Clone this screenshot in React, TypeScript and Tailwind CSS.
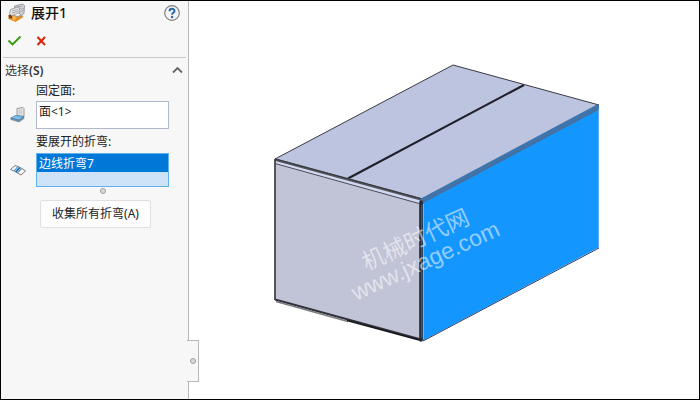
import React, { useState } from 'react';

const UnfoldIcon: React.FC = () => (
  <svg className="w-5 h-5 shrink-0" viewBox="0 0 20 20" aria-hidden="true">
    <path d="M1.500 13L5 10.500L15 12L16.500 14L8.500 19L1.500 16Z" fill="#e08f22" />
    <path d="M4 14L8 12L9.500 15L7 18Z" fill="#f6b545" />
    <path d="M1.500 12L4.500 11L5.500 15L2 15.500Z" fill="#7d4320" />
    <path d="M7.500 3L15.500 1L17.500 2.500L17 10.500L13 13.500L8.500 12.500Z" fill="#cfd1d4" stroke="#8a8d92" strokeWidth="0.800" />
    <path d="M3.500 6.500L10.500 4L12.500 5L12 11L4.500 12.500L2.500 10.500Z" fill="#e3e4e6" stroke="#8d9095" strokeWidth="0.800" />
    <path d="M5 8L11 6.500M5 10L11 8.500M9.500 4L15 3M13.500 6L17 5.500M13.500 8.500L16.500 7.500" stroke="#999ca1" strokeWidth="0.800" />
    <path d="M7.500 11.500L11.500 10L14 11.500L11 13.500L8 13Z" fill="#f4f4f4" stroke="#84878c" strokeWidth="0.600" />
  </svg>
);

const FaceIcon: React.FC = () => (
  <svg className="w-4 h-4 shrink-0" viewBox="0 0 16 16" aria-hidden="true">
    <path d="M7 1.500L13 0.500L14 1.500V9.500L7 8.500Z" fill="#e4e4e5" stroke="#909295" strokeWidth="0.900" />
    <path d="M8.500 3L12 2.500V7.500L8.500 7Z" fill="#cdcfd2" />
    <path d="M5.500 8.500L14 9.500L9 13L0.800 11Z" fill="#7cc0f0" stroke="#4d86b0" strokeWidth="0.800" />
    <path d="M0.800 11V12.500L9 15L14 11.500V9.500L9 13Z" fill="#6d93b0" stroke="#5c7488" strokeWidth="0.500" />
  </svg>
);

const BendIcon: React.FC = () => (
  <svg className="w-4 h-4 shrink-0" viewBox="0 0 16 16" aria-hidden="true">
    <path d="M0.500 7.500L5 3.500L8 4.500L4 9Z" fill="#f4f4f5" stroke="#6f7276" strokeWidth="0.900" />
    <path d="M4 9L8 4.500L12 6.500L7.500 11Z" fill="#a8d8f5" stroke="#5289b0" strokeWidth="0.800" />
    <path d="M5.700 10L10 5.500" stroke="#1870b5" strokeWidth="1.800" />
    <path d="M7.500 11L12 6.500L15.500 9L11 13Z" fill="#f4f4f5" stroke="#6f7276" strokeWidth="0.900" />
  </svg>
);

const Grip: React.FC = () => (
  <span className="block w-1.5 h-1.5 rounded-full bg-[#d8d8d8] border border-[#a0a0a0]" />
);

const BoxModel: React.FC = () => (
  <svg className="block w-full h-auto" viewBox="189 1 510 398" role="img" aria-label="机械时代网 www.jxage.com">
    {/* top flaps */}
    <path d="M275 159L453 65L599 105L422 199Z" fill="#bdc4e0" stroke="#3a3a42" strokeWidth="1" />
    <path d="M348 178.500L524 85" stroke="#20202c" strokeWidth="2" />
    {/* front face */}
    <path d="M275 160L422 200V341L275 300Z" fill="#c1c3d6" />
    <path d="M276 161L421 201V204L276 164Z" fill="#d0d8f4" />
    <path d="M275 159.500L422 199.500" stroke="#55575d" strokeWidth="2.400" />
    <path d="M275 159L422 199" stroke="#303036" strokeWidth="0.800" />
    <path d="M275 163.500L419 203.500" stroke="#4a4b50" strokeWidth="1" />
    <path d="M275 299.500L421 339.500" stroke="#303138" strokeWidth="2" />
    <path d="M276 301.500L348 321.500" stroke="#797b80" strokeWidth="1.500" />
    <path d="M347 320.500L421 340.500" stroke="#17171d" strokeWidth="1.500" />
    <path d="M275 159V300" stroke="#44444b" strokeWidth="1.800" />
    {/* selected side */}
    <path d="M422 201L598.500 107V247.500L422 341Z" fill="#1496ff" />
    <path d="M420 199L597 104.500L599 106V109.500L422 203.500Z" fill="#3f75ad" />
    <path d="M422 202.500L599 108.500" stroke="#476f9b" strokeWidth="1.600" />
    <path d="M598.500 109V247.500" stroke="#5fa9ed" strokeWidth="1" />
    <path d="M423 341L599 248" stroke="#273b63" strokeWidth="1" />
    <path d="M423.500 204V339" stroke="#8aaddd" strokeWidth="1" />
    <path d="M421 202V340" stroke="#292933" strokeWidth="3.600" strokeLinecap="round" />
    <path d="M421.500 205V338" stroke="#5c5a66" strokeWidth="0.800" />
    {/* watermark */}
    <g transform="rotate(-24.500 356 301)" fill="#ffffff" fillOpacity="0.550" className="font-['Liberation_Sans','Noto_Sans_CJK_SC',sans-serif]">
      <text x="378" y="278" fontSize="23">机械时代网</text>
      <text x="356" y="301" fontSize="23">www.jxage.com</text>
    </g>
  </svg>
);

const App: React.FC = () => {
  const [open, setOpen] = useState(true);
  const [face, setFace] = useState('面<1>');

  return (
    <div className="flex min-h-screen border border-black bg-white text-xs text-[#222222] font-['Noto_Sans','Noto_Sans_CJK_SC',sans-serif]">
      <aside className="relative w-[188px] shrink-0 bg-[#f7f7f7] border-r border-[#b8b8b8]">
        <header className="flex items-center h-6 pl-1.5 pr-2">
          <UnfoldIcon />
          <h1 className="ml-1 flex-1 text-sm leading-5 font-medium text-[#111111]">展开1</h1>
          <button type="button" aria-label="帮助">
            <svg className="w-4 h-4" viewBox="0 0 16 16">
              <circle cx="8" cy="8" r="7.300" fill="#f4f4f4" stroke="#808080" strokeWidth="1.200" />
              <path d="M5.500 6.200C5.500 3 10.700 3.100 10.500 6.100C10.300 7.800 8.100 7.900 8.100 9.700" fill="none" stroke="#2867a5" strokeWidth="2" />
              <circle cx="8.100" cy="12" r="1.200" fill="#2867a5" />
            </svg>
          </button>
        </header>

        <div className="flex items-center gap-3 h-8 pl-1.5">
          <button type="button" aria-label="确定">
            <svg className="w-4 h-4" viewBox="0 0 16 16">
              <path d="M1.500 7.500L5.500 11.500L13.500 3.500" fill="none" stroke="#2f9a10" strokeWidth="1.800" />
            </svg>
          </button>
          <button type="button" aria-label="取消">
            <svg className="w-4 h-4" viewBox="0 0 16 16">
              <path d="M2.500 4L10 12M10 4L2.500 12" fill="none" stroke="#dc2408" strokeWidth="2" />
            </svg>
          </button>
        </div>

        <section className="mx-0.5 border-t border-[#c8c8c8]">
          <button type="button" aria-expanded={open} onClick={() => setOpen(!open)} className="flex items-center justify-between w-full h-[25px] px-0.5 text-[#333333]">
            <span>选择<span className="font-semibold">(S)</span></span>
            <svg className="w-3 h-3" viewBox="0 0 12 12" aria-hidden="true">
              <path d="M1 7.500L5.500 3L10 7.500" fill="none" stroke="#666666" strokeWidth="1.800" />
            </svg>
          </button>

          {open && (
            <div className="pl-[33px] pr-[17px]">
              <label htmlFor="face" className="block h-[18px] leading-4">固定面:</label>
              <div className="flex items-center gap-2.5 -ml-[26px]">
                <FaceIcon />
                <textarea id="face" value={face} onChange={e => setFace(e.target.value)} className="block flex-1 min-w-0 h-7 px-0.5 bg-white border border-[#b0b8cc] resize-none overflow-hidden leading-5 outline-none" />
              </div>

              <div id="bends" className="h-6 pt-[5px] leading-4">要展开的折弯:</div>
              <div className="flex items-center gap-2.5 -ml-[26px]">
                <BendIcon />
                <ul role="listbox" aria-labelledby="bends" className="flex-1 h-[34px] bg-[#cfe3f8] border border-[#62b2ea]">
                  <li role="option" aria-selected="true" className="h-[18px] pl-0.5 leading-5 bg-[#0078d7] text-white">边线折弯7</li>
                </ul>
              </div>
              <div className="flex justify-center pt-px"><Grip /></div>

              <button type="button" className="block ml-1 mt-1.5 w-[111px] h-7 bg-[#fdfdfd] border border-[#e0e0e0] rounded-xs leading-4">收集所有折弯(A)</button>
            </div>
          )}
        </section>

        {/* collapse handle on the panel's edge */}
        <button type="button" aria-label="收起面板" className="absolute -right-[11px] bottom-[17px] flex items-center w-3 h-[42px] pl-[3px] bg-[#f7f7f7] border border-l-0 border-[#b8b8b8]">
          <Grip />
        </button>
      </aside>

      <main className="flex-1 min-w-0">
        <BoxModel />
      </main>
    </div>
  );
};

export default App;
